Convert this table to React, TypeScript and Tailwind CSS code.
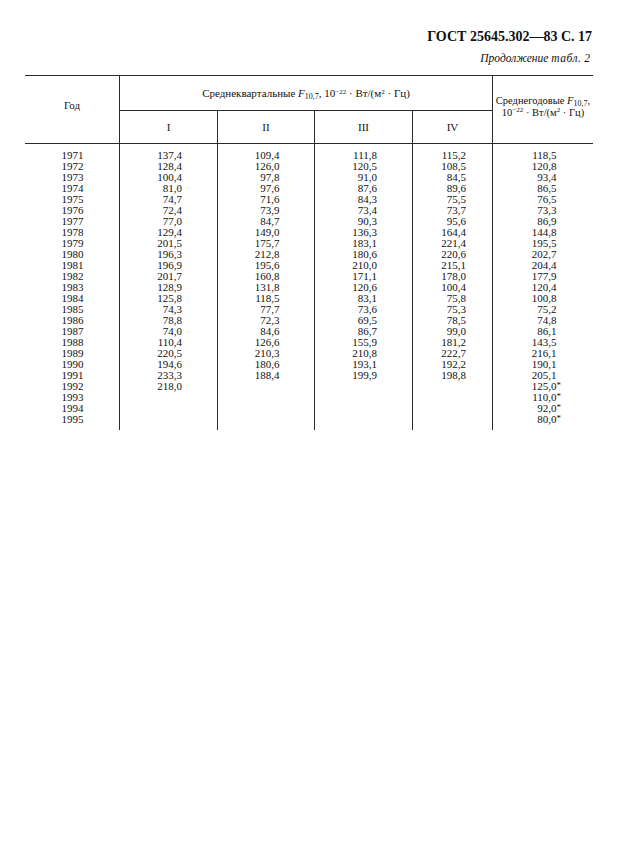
const years = Array.from({ length: 25 }, (_, i) => String(1971 + i))

const q1 = ['137,4', '128,4', '100,4', '81,0', '74,7', '72,4', '77,0', '129,4', '201,5', '196,3', '196,9', '201,7', '128,9', '125,8', '74,3', '78,8', '74,0', '110,4', '220,5', '194,6', '233,3', '218,0']
const q2 = ['109,4', '126,0', '97,8', '97,6', '71,6', '73,9', '84,7', '149,0', '175,7', '212,8', '195,6', '160,8', '131,8', '118,5', '77,7', '72,3', '84,6', '126,6', '210,3', '180,6', '188,4']
const q3 = ['111,8', '120,5', '91,0', '87,6', '84,3', '73,4', '90,3', '136,3', '183,1', '180,6', '210,0', '171,1', '120,6', '83,1', '73,6', '69,5', '86,7', '155,9', '210,8', '193,1', '199,9']
const q4 = ['115,2', '108,5', '84,5', '89,6', '75,5', '73,7', '95,6', '164,4', '221,4', '220,6', '215,1', '178,0', '100,4', '75,8', '75,3', '78,5', '99,0', '181,2', '222,7', '192,2', '198,8']
const annual = ['118,5', '120,8', '93,4', '86,5', '76,5', '73,3', '86,9', '144,8', '195,5', '202,7', '204,4', '177,9', '120,4', '100,8', '75,2', '74,8', '86,1', '143,5', '216,1', '190,1', '205,1', '125,0*', '110,0*', '92,0*', '80,0*']

const line = 'border-[#2a2a2a]'

function Flux() {
  return (
    <>
      <i>F</i>
      <sub className="text-[8px] align-baseline relative top-[2px]">10,7</sub>
    </>
  )
}

function Units() {
  return (
    <>
      10<sup className="text-[7px]">−22</sup> · Вт/(м<sup className="text-[7px]">2</sup> · Гц)
    </>
  )
}

function ValueColumn({ values, border = true }: { values: string[]; border?: boolean }) {
  return (
    <div className={`pt-[6px] pb-[5px] ${border ? `border-r ${line}` : ''}`}>
      {values.map((v, i) => {
        const star = v.endsWith('*')
        const num = star ? v.slice(0, -1) : v
        return (
          <div key={i} className="flex justify-center h-[11px]">
            <span className="w-[27px] text-right">{num}</span>
            <span className="w-0 overflow-visible whitespace-nowrap text-[9px] relative -top-[1px]">{star ? '*' : ''}</span>
          </div>
        )
      })}
    </div>
  )
}

export default function App() {
  return (
    <div className="w-[617px] min-h-[847px] bg-white text-[#111] font-['Liberation_Serif','Times_New_Roman',serif]">
      <div className="pt-[29px] pr-[25px] text-right text-[14px] font-bold leading-[16px]">
        ГОСТ 25645.302—83 С. 17
      </div>
      <div className="pt-[6px] pr-[27px] text-right text-[11.5px] italic leading-[14px]">
        Продолжение <span className="tracking-[0.5px]">табл.</span> 2
      </div>

      <div className={`ml-[25px] mt-[10px] w-[568px] border-t-[1.5px] ${line} grid grid-cols-[95px_98px_97px_98px_80px_100px] grid-rows-[35px_33px_auto] text-[11px] leading-[11px]`}>
        <div className={`row-span-2 border-r border-b ${line} flex justify-center pt-[24px]`}>Год</div>
        <div className={`col-span-4 border-r border-b ${line} flex items-center justify-center pt-[1px] whitespace-nowrap`}>
          <span>
            Среднеквартальные <Flux />, <Units />
          </span>
        </div>
        <div className={`row-span-2 border-b ${line} flex flex-col items-center justify-center pb-[6px] text-[10.5px] leading-[12px] whitespace-nowrap`}>
          <span>
            Среднегодовые <Flux />,
          </span>
          <span>
            <Units />
          </span>
        </div>
        <div className={`border-r border-b ${line} flex items-center justify-center`}>I</div>
        <div className={`border-r border-b ${line} flex items-center justify-center`}>II</div>
        <div className={`border-r border-b ${line} flex items-center justify-center`}>III</div>
        <div className={`border-r border-b ${line} flex items-center justify-center`}>IV</div>

        <div className={`pt-[6px] pb-[5px] border-r ${line}`}>
          {years.map((y) => (
            <div key={y} className="h-[11px] text-center pl-[1px]">
              {y}
            </div>
          ))}
        </div>
        <ValueColumn values={q1} />
        <ValueColumn values={q2} />
        <ValueColumn values={q3} />
        <ValueColumn values={q4} />
        <ValueColumn values={annual} border={false} />
      </div>
    </div>
  )
}
